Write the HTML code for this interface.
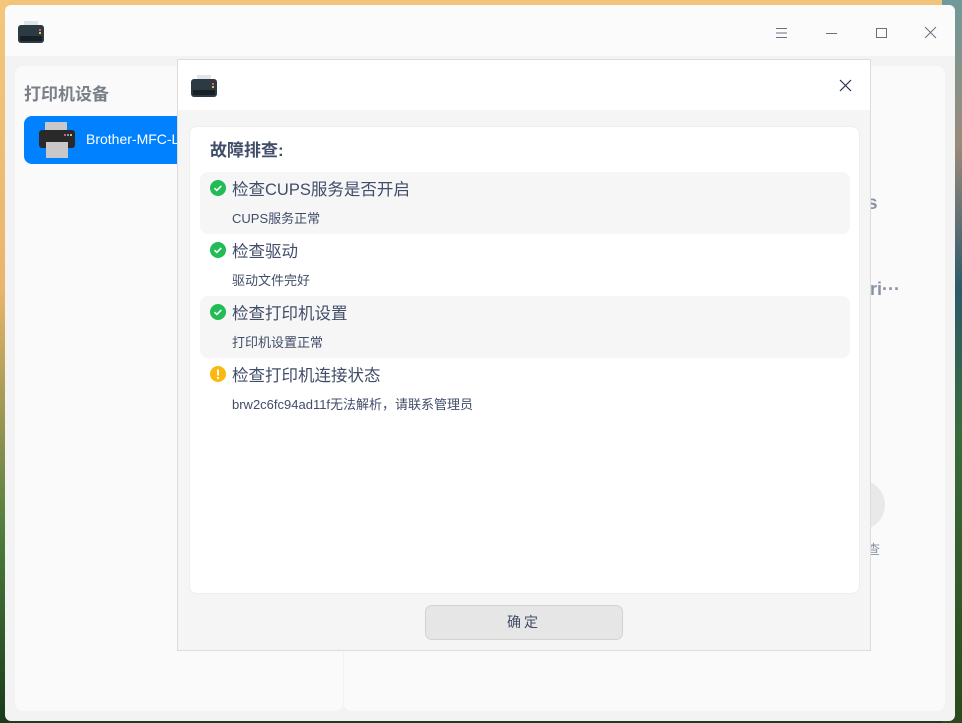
<!DOCTYPE html>
<html><head><meta charset="utf-8"><style>
*{margin:0;padding:0;box-sizing:border-box}
body{width:962px;height:723px;overflow:hidden;position:relative;font-family:"Liberation Sans","Noto Sans CJK SC",sans-serif;line-height:1.2;
background:linear-gradient(180deg,#f2c37a 0%,#e9c58a 20%,#6a8d7a 45%,#2f5a3a 75%,#1f3a22 100%)}
.bgr{position:absolute;right:0;top:0;width:20px;height:723px;background:linear-gradient(180deg,#6f9a9a,#9a8a7a 20%,#2d5a6a 40%,#3a6a3a 60%,#2a4a1a)}
.bgl{position:absolute;left:0;top:0;width:8px;height:723px;background:linear-gradient(180deg,#f3c77c,#eab56a 40%,#4a7a3a 75%,#1a3a1a)}
.win{position:absolute;left:5px;top:5px;width:950px;height:716px;background:#f3f3f3;border-radius:6px;overflow:hidden}
.tb{position:absolute;left:0;top:0;width:950px;height:51px;background:#fbfbfb}
.lp{position:absolute;left:10px;top:61px;width:328px;height:645px;background:#fafafa;border-radius:8px}
.rp{position:absolute;left:339px;top:61px;width:601px;height:645px;background:#fafafa;border-radius:8px}
.title{position:absolute;left:19px;top:80px;font-size:17px;font-weight:bold;color:#7a7f88}
.sel{position:absolute;left:24px;top:116px;width:170px;height:48px;background:#0081ff;border-radius:8px}
.sel span{position:absolute;left:62px;top:15px;color:#fff;font-size:14px}
.dlg{position:absolute;left:177px;top:59px;width:694px;height:592px;background:#f5f5f5;border:1px solid #dcdcdc}
.dh{position:absolute;left:0;top:0;width:692px;height:50px;background:#fff}
.card{position:absolute;left:11px;top:66px;width:671px;height:468px;background:#fff;border-radius:8px;border:1px solid #eee}
.ct{position:absolute;left:20px;top:14px;font-size:17px;font-weight:bold;color:#414d68}
.it{position:absolute;left:10px;width:650px;height:62px;border-radius:8px}
.it.g{background:#f6f6f6}
.it .h{position:absolute;left:32px;top:9px;font-size:16.5px;color:#414d68}
.it .s{position:absolute;left:32px;top:39px;font-size:13px;color:#414d68}
.ic{position:absolute;left:10px;top:8px;width:16px;height:16px;border-radius:50%}
.btn{position:absolute;left:247px;top:545px;width:198px;height:35px;background:#e6e6e6;border:1px solid #d2d2d2;border-radius:7px;text-align:center;line-height:33px;font-size:14px;color:#414d68;letter-spacing:3px}
</style></head><body>
<div class="bgl"></div><div class="bgr"></div>
<div class="win">
<div class="tb">
<svg style="position:absolute;left:12px;top:16px" width="28" height="24" viewBox="0 0 28 24"><rect x="7" y="0" width="14" height="6" fill="#dfe6ea"/><rect x="1" y="4" width="26" height="18" rx="3" fill="#2c3a44"/><rect x="3" y="15" width="22" height="5" fill="#172026"/><rect x="22" y="8" width="2" height="2" fill="#e55"/><rect x="22" y="11" width="2" height="2" fill="#eb4"/></svg>
<svg style="position:absolute;left:770px;top:22px" width="14" height="12"><path d="M1 1.5h11M1 6h11M1 10.5h11" stroke="#6a7080" stroke-width="1"/></svg>
<svg style="position:absolute;left:820px;top:27px" width="14" height="4"><path d="M1 1.5h11" stroke="#6a7080"/></svg>
<svg style="position:absolute;left:870px;top:22px" width="14" height="13"><rect x="1.5" y="1.5" width="10" height="9" fill="none" stroke="#6a7080"/></svg>
<svg style="position:absolute;left:919px;top:21px" width="14" height="14"><path d="M1 1l11 11M12 1L1 12" stroke="#6a7080"/></svg>
</div>
<div class="lp"></div><div class="rp"></div>
<div class="title">打印机设备</div>
<div style="position:absolute;left:862px;top:188px;font-size:19px;font-weight:bold;color:#8a93a5">s</div>
<div style="position:absolute;left:855px;top:274px;font-size:18px;font-weight:bold;color:#8a93a5">eri···</div>
<div style="position:absolute;left:830px;top:475px;width:50px;height:50px;border-radius:50%;background:#e9e9e9"></div>
<div style="position:absolute;left:862px;top:537px;font-size:13px;color:#8a93a5">查</div>
</div>
<div class="sel"><svg style="position:absolute;left:14px;top:6px" width="38" height="36" viewBox="0 0 38 36"><rect x="7" y="0" width="22" height="10" fill="#c8c8c8"/><rect x="1" y="8" width="36" height="18" rx="3" fill="#2a2a2a"/><rect x="8" y="20" width="22" height="16" fill="#c8c8c8"/><rect x="26" y="12" width="2" height="2" fill="#e55"/><rect x="29" y="12" width="2" height="2" fill="#5ae"/><rect x="32" y="12" width="2" height="2" fill="#eb4"/></svg><span>Brother-MFC-L</span></div>
<div class="dlg">
<div class="dh">
<svg style="position:absolute;left:12px;top:15px" width="28" height="24" viewBox="0 0 28 24"><rect x="7" y="0" width="14" height="6" fill="#dfe6ea"/><rect x="1" y="4" width="26" height="18" rx="3" fill="#2c3a44"/><rect x="3" y="15" width="22" height="5" fill="#172026"/><rect x="22" y="8" width="2" height="2" fill="#e55"/><rect x="22" y="11" width="2" height="2" fill="#eb4"/></svg>
<svg style="position:absolute;left:661px;top:19px" width="14" height="14"><path d="M1 1l11 11M12 1L1 12" stroke="#2a3050" stroke-width="1.2"/></svg>
</div>
<div class="card">
<div class="ct">故障排查:</div>
<div class="it g" style="top:45px"><div class="ic" style="background:#22bb55"><svg width="16" height="16"><path d="M4.5 8.2l2.3 2.2 4.5-4.5" stroke="#fff" stroke-width="1.6" fill="none"/></svg></div><div class="h">检查CUPS服务是否开启</div><div class="s">CUPS服务正常</div></div>
<div class="it" style="top:107px"><div class="ic" style="background:#22bb55"><svg width="16" height="16"><path d="M4.5 8.2l2.3 2.2 4.5-4.5" stroke="#fff" stroke-width="1.6" fill="none"/></svg></div><div class="h">检查驱动</div><div class="s">驱动文件完好</div></div>
<div class="it g" style="top:169px"><div class="ic" style="background:#22bb55"><svg width="16" height="16"><path d="M4.5 8.2l2.3 2.2 4.5-4.5" stroke="#fff" stroke-width="1.6" fill="none"/></svg></div><div class="h">检查打印机设置</div><div class="s">打印机设置正常</div></div>
<div class="it" style="top:231px"><div class="ic" style="background:#fbb80f"><svg width="16" height="16"><path d="M8 3.5v6" stroke="#fff" stroke-width="2"/><circle cx="8" cy="12" r="1.1" fill="#fff"/></svg></div><div class="h">检查打印机连接状态</div><div class="s">brw2c6fc94ad11f无法解析，请联系管理员</div></div>
</div>
<div class="btn">确定</div>
</div>
</body></html>
